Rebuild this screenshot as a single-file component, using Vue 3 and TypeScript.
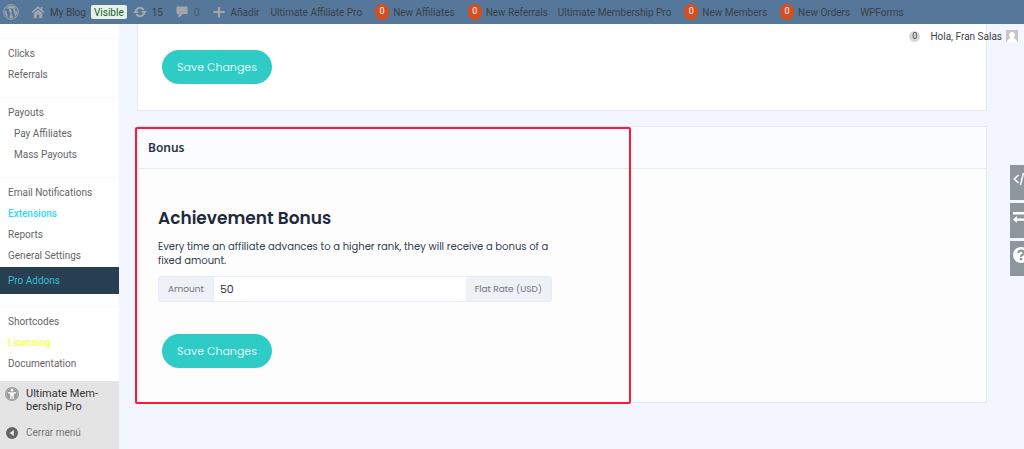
<script setup lang="ts">
import { ref } from 'vue'

interface MenuItem {
  label: string
  tone?: 'cyan' | 'yellow' | 'current'
  nested?: boolean
}

interface BarLink {
  label: string
  count?: number
}

const groups: MenuItem[][] = [
  [{ label: 'Clicks' }, { label: 'Referrals' }],
  [
    { label: 'Payouts' },
    { label: 'Pay Affiliates', nested: true },
    { label: 'Mass Payouts', nested: true },
  ],
  [
    { label: 'Email Notifications' },
    { label: 'Extensions', tone: 'cyan' },
    { label: 'Reports' },
    { label: 'General Settings' },
    { label: 'Pro Addons', tone: 'current' },
  ],
  [{ label: 'Shortcodes' }, { label: 'Licensing', tone: 'yellow' }, { label: 'Documentation' }],
]

const barLinks: BarLink[] = [
  { label: 'Ultimate Affiliate Pro' },
  { label: 'New Affiliates', count: 0 },
  { label: 'New Referrals', count: 0 },
  { label: 'Ultimate Membership Pro' },
  { label: 'New Members', count: 0 },
  { label: 'New Orders', count: 0 },
  { label: 'WPForms' },
]

const amount = ref('50')
</script>

<template>
  <div class="page">
    <header class="topbar">
      <a href="#" class="wp" aria-label="WordPress">
        <svg viewBox="0 0 20 20" width="16" height="16">
          <circle cx="10" cy="10" r="9.2" fill="none" stroke="currentColor" stroke-width="1.2" />
          <path
            fill="currentColor"
            d="M2.9 7a7.8 7.8 0 0 0 3.8 10zM3.6 5.7h4.7v.7l-1.1.2 2.5 7.5 1.4-4.3-1.1-3.2-1-.2v-.7h4.8v.7l-1.2.2 2.5 7.4.7-2.6c.8-2.4-.5-3.2-.8-4.2-.3-1.1.3-2.1 1.3-2.2A7.8 7.8 0 0 0 3.6 5.7zM10.2 10.8l-2.3 6.7c1.5.4 3.2.4 4.7-.1zM16.9 6.5c.2 1.5-.1 2.8-.6 4.2L14 16.7A7.8 7.8 0 0 0 16.9 6.5z"
          />
        </svg>
      </a>
      <a href="#" class="home">
        <svg viewBox="0 0 20 20" width="14" height="14">
          <path fill="currentColor" d="M10 1.5 1 10l1.4 1.4L10 4.6l7.6 6.8L19 10l-2.6-2.5V3H14v2.3zM4 11.6 10 6.3l6 5.3V19h-4.2v-5H8.2v5H4z" />
        </svg>
        <span>My Blog</span>
      </a>
      <a href="#" class="visible">Visible</a>
      <a href="#" class="updates">
        <svg viewBox="0 0 20 20" width="14" height="14">
          <path fill="none" stroke="currentColor" stroke-width="3" d="M4.400 7.600A6.200 6.200 0 0 1 15.400 7M15.600 12.400A6.200 6.200 0 0 1 4.600 13" />
          <path fill="currentColor" d="M0 11.500 4.200 6l4.200 5.500zM20 8.500 15.800 14l-4.200-5.500z" />
        </svg>
        <span>15</span>
      </a>
      <a href="#" class="comments">
        <svg viewBox="0 0 20 20" width="14" height="14">
          <path fill="currentColor" d="M4 2h12q2 0 2 2v7q0 2-2 2h-5l-6 6v-6H4q-2 0-2-2V4q0-2 2-2z" />
        </svg>
        <span>0</span>
      </a>
      <a href="#" class="add">
        <svg viewBox="0 0 20 20" width="14" height="14">
          <path fill="currentColor" d="M8.500 3h3v5.500H18v3h-6.500V18h-3v-6.500H2v-3h6.500z" />
        </svg>
        <span>Añadir</span>
      </a>
      <nav class="barlinks" aria-label="Plugins">
        <a v-for="link in barLinks" :key="link.label" href="#">
          <span v-if="link.count !== undefined" class="count">{{ link.count }}</span>
          <span>{{ link.label }}</span>
        </a>
      </nav>
    </header>

    <div class="body">
      <aside class="sidebar">
        <nav aria-label="Menu">
          <ul v-for="(group, i) in groups" :key="i">
            <li v-for="item in group" :key="item.label">
              <a href="#" :class="[item.tone, { nested: item.nested }]">{{ item.label }}</a>
            </li>
          </ul>
        </nav>
        <div class="foot">
          <a href="#" class="plugin">
            <svg viewBox="0 0 20 20" width="14" height="14">
              <circle cx="10" cy="10" r="10" fill="#999" />
              <circle cx="10" cy="10" r="8.200" fill="none" stroke="#b8b8b8" stroke-width="1" />
              <circle cx="10" cy="4.700" r="1.900" fill="#fff" />
              <path fill="#fff" d="M4 7.200q6 1.200 12 0v1.700l-3.600.8.300 7.300H11l-.6-4.500h-.8L9 17H7.300l.3-7.300L4 8.900z" />
            </svg>
            <span>Ultimate Mem-<br />bership Pro</span>
          </a>
          <button type="button" class="collapse">
            <svg viewBox="0 0 20 20" width="12" height="12">
              <circle cx="10" cy="10" r="10" fill="#666" />
              <path fill="#e4e4e4" d="M13 5v10l-7-5z" />
            </svg>
            <span>Cerrar menú</span>
          </button>
        </div>
      </aside>

      <main>
        <section class="card first">
          <button type="button" class="save">Save Changes</button>
        </section>
        <section class="card bonus">
          <h2>Bonus</h2>
          <form class="content" @submit.prevent>
            <h3>Achievement Bonus</h3>
            <p>Every time an affiliate advances to a higher rank, they will receive a bonus of a<br />fixed amount.</p>
            <div class="field">
              <label for="amount">Amount</label>
              <input id="amount" v-model="amount" type="text" />
              <span>Flat Rate (USD)</span>
            </div>
            <button type="submit" class="save">Save Changes</button>
          </form>
          <div class="highlight"></div>
        </section>
      </main>
    </div>

    <div class="account">
      <span class="notice">0</span>
      <a href="#">
        <span>Hola, Fran Salas</span>
        <svg viewBox="0 0 12 12" width="12" height="12">
          <path fill="#c5c5c5" d="M0 0h12v12H0z" />
          <path fill="#fff" d="M1 12q0-3 3.500-4-1.300-1-1.300-3Q3.200 2 6 2t2.800 3q0 2-1.300 3Q11 9 11 12z" />
        </svg>
      </a>
    </div>

    <div class="tools">
      <button type="button" aria-label="Code">
        <svg viewBox="0 0 18 14" width="18" height="14">
          <path fill="none" stroke="#fff" stroke-width="1.500" d="M5.500 3 1.200 7l4.300 4M7.500 13l3-12M12.500 3l4.300 4-4.300 4" />
        </svg>
      </button>
      <button type="button" aria-label="Switch">
        <svg viewBox="0 0 18 14" width="18" height="14">
          <path fill="#fff" d="M0 2h14V0l4 3.200-4 3.200V4.600H0zM18 10.800H4V13L0 9.500 4 6v2.400h14z" />
        </svg>
      </button>
      <button type="button" aria-label="Help">
        <svg viewBox="0 0 16 16" width="16" height="16">
          <circle cx="8" cy="8" r="8" fill="#fff" />
          <path fill="none" stroke="#8c969b" stroke-width="2.200" d="M5.300 6.200Q5.500 3.700 8 3.700t2.600 2.200Q10.600 7.300 9.200 8T8 10" />
          <path fill="#8c969b" d="M6.900 11h2.300v2.200H6.900z" />
        </svg>
      </button>
    </div>
  </div>
</template>

<style>
body {
  background: #f3f6fe;
}
</style>

<style scoped>
* {
  box-sizing: border-box;
}
.page {
  position: relative;
  display: flex;
  flex-direction: column;
  min-height: 100vh;
  background: #f3f6fe;
  font-family: Roboto, "Liberation Sans", sans-serif;
  font-size: 10px;
  color: #3c434a;
  overflow: hidden;
}
a {
  color: inherit;
  text-decoration: none;
}
svg {
  display: block;
  flex: none;
}
button {
  font-family: inherit;
  border: 0;
  padding: 0;
  cursor: pointer;
}
.topbar {
  display: flex;
  align-items: center;
  height: 24px;
  padding-left: 3px;
  background: #557799;
  color: #3b4148;
  white-space: nowrap;
}
.topbar a {
  display: flex;
  align-items: center;
  gap: 5px;
}
.topbar svg {
  color: #a3a6a9;
}
.topbar .home {
  margin-left: 12px;
}
.topbar .visible {
  height: 14px;
  margin-left: 5px;
  padding: 0 3px;
  border-radius: 2px;
  background: #e6f2e8;
  color: #14602a;
}
.topbar .updates {
  margin-left: 6px;
}
.topbar .comments {
  margin-left: 12px;
  color: #4c5b6b;
}
.topbar .add {
  margin-left: 12px;
}
.barlinks {
  display: flex;
  gap: 10px;
  margin-left: 11px;
}
.barlinks a {
  gap: 4px;
}
.count {
  width: 14px;
  height: 16px;
  margin-left: 3px;
  border-radius: 8px;
  background: #d54e21;
  color: #fff;
  font-size: 9px;
  line-height: 15px;
  text-align: center;
}
.body {
  display: flex;
  flex: 1;
}
.sidebar {
  display: flex;
  flex-direction: column;
  flex: none;
  width: 119px;
  padding-top: 14px;
  background: #fff;
  color: #666;
}
ul {
  list-style: none;
  margin: 0;
  padding: 4px 0 12px;
  border-top: 1px solid #f7f7f7;
}
ul:last-child {
  padding-bottom: 7px;
}
li a {
  display: block;
  padding-left: 8px;
  line-height: 21px;
}
li .nested {
  padding-left: 14px;
}
li .cyan {
  color: #2cdcf4;
  font-weight: 500;
}
li .yellow {
  color: #f4ff26;
}
li .current {
  margin-top: 1px;
  background: #283e51;
  color: #35bfd0;
  line-height: 27px;
}
.foot {
  flex: 1;
  padding: 6px 5px;
  background: #e4e4e4;
}
.foot .plugin,
.foot .collapse {
  display: flex;
  gap: 7px;
}
.foot .plugin {
  color: #333;
  font-size: 11px;
  line-height: 13px;
}
.foot .collapse {
  align-items: center;
  gap: 8px;
  margin-top: 12px;
  padding-left: 1px;
  background: none;
  color: #777;
  font-size: 10px;
  line-height: 15px;
}
main {
  flex: 1;
  min-width: 0;
  padding: 0 37px 46px 18px;
  font-family: Poppins, Inter, "Open Sans", sans-serif;
}
.card {
  position: relative;
  border: 1px solid #e8e9ee;
  background: #fdfdfe;
}
.first {
  padding: 26px 24px;
  border-top: 0;
  background: #fff;
}
.save {
  display: block;
  width: 110px;
  height: 34px;
  padding-top: 1px;
  border-radius: 17px;
  background: #2fccc5;
  color: #dffaf8;
  font-size: 11px;
}
.bonus {
  margin-top: 15px;
}
h2 {
  margin: 0;
  padding-left: 10px;
  border-bottom: 1px solid #e4ecfa;
  background: #fbfcff;
  color: #2a3348;
  font: 600 12px/41px "Noto Sans", sans-serif;
}
.content {
  padding: 36px 20px 34px;
}
.content .save {
  margin: 32px 0 0 4px;
}
h3 {
  margin: 0;
  color: #1f293d;
  font-size: 17px;
  font-weight: 600;
  line-height: 27px;
}
p {
  margin: 8px 0;
  color: #343d52;
  font-size: 10px;
  line-height: 14px;
}
.field {
  display: flex;
  width: 394px;
  max-width: 100%;
  height: 26px;
  border: 1px solid #e6edfa;
  border-radius: 3px;
  background: #eef1f6;
  color: #70757e;
  font-size: 9px;
  line-height: 24px;
  overflow: hidden;
}
.field label,
.field span {
  flex: none;
  padding: 0 9px;
}
.field input {
  flex: 1;
  min-width: 0;
  padding: 0 6px;
  border: 0;
  border-left: 1px solid #e6edfa;
  background: #fff;
  color: #2f3748;
  font-family: inherit;
  font-size: 11px;
}
.highlight {
  position: absolute;
  top: 0;
  bottom: -2px;
  left: -3px;
  width: 496px;
  border: 2px solid #ff1837;
  border-radius: 2px;
  pointer-events: none;
}
.account {
  position: absolute;
  top: 30px;
  right: 6px;
  display: flex;
  align-items: center;
  gap: 10px;
}
.account a {
  display: flex;
  align-items: center;
  gap: 4px;
}
.notice {
  width: 11px;
  height: 11px;
  border-radius: 50%;
  background: #d8d8d8;
  font-size: 9px;
  line-height: 11px;
  text-align: center;
}
.tools {
  position: absolute;
  top: 165px;
  right: 0;
  display: grid;
  gap: 3px;
  width: 14px;
}
.tools button {
  height: 35px;
  padding: 0 0 8px 3px;
  background: #8c969b;
  overflow: hidden;
}
</style>
